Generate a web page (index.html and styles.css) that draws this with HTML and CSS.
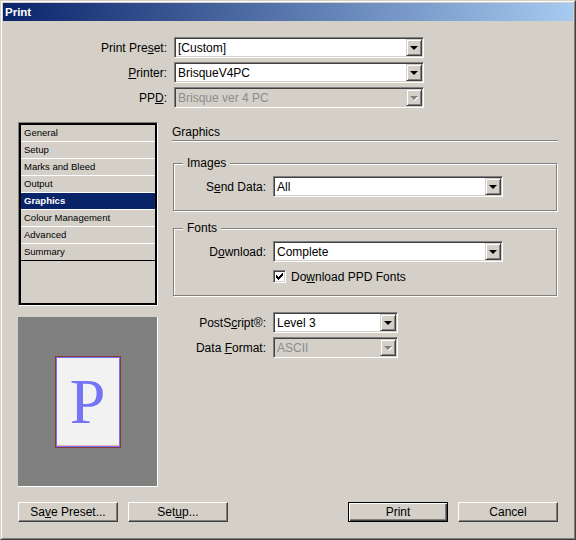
FILE: index.html
```html
<!DOCTYPE html>
<html>
<head>
<meta charset="utf-8">
<title>Print</title>
<link rel="stylesheet" href="styles.css">
</head>
<body>
<div class="window">
  <div class="frame">
    <div class="titlebar"><span>Print</span></div>
    <div class="content">
      <div class="top-form">
        <label class="lbl"><span>Print Pre<u>s</u>et:</span></label>
        <div class="select"><span class="value">[Custom]</span><span class="drop"><i class="arrow"></i></span></div>
        <label class="lbl"><span><u>P</u>rinter:</span></label>
        <div class="select"><span class="value">BrisqueV4PC</span><span class="drop"><i class="arrow"></i></span></div>
        <label class="lbl"><span>PP<u>D</u>:</span></label>
        <div class="select disabled"><span class="value">Brisque ver 4 PC</span><span class="drop"><i class="arrow"></i></span></div>
      </div>

      <div class="main">
        <div class="left">
          <div class="listbox">
            <ul class="list">
              <li>General</li>
              <li>Setup</li>
              <li>Marks and Bleed</li>
              <li>Output</li>
              <li class="selected">Graphics</li>
              <li>Colour Management</li>
              <li>Advanced</li>
              <li class="last">Summary</li>
            </ul>
          </div>
          <div class="preview">
            <div class="page"><span class="page-letter">P</span></div>
          </div>
        </div>

        <div class="right">
          <div class="heading">Graphics</div>

          <div class="group group-images">
            <span class="legend">Images</span>
            <div class="grid">
              <label class="lbl"><span>S<u>e</u>nd Data:</span></label>
              <div class="select"><span class="value">All</span><span class="drop"><i class="arrow"></i></span></div>
            </div>
          </div>

          <div class="group group-fonts">
            <span class="legend">Fonts</span>
            <div class="grid">
              <label class="lbl"><span>D<u>o</u>wnload:</span></label>
              <div class="select"><span class="value">Complete</span><span class="drop"><i class="arrow"></i></span></div>
              <span></span>
              <div class="check-row">
                <span class="checkbox"><svg width="7" height="7" viewBox="0 0 7 7"><path d="M0 2h1v1h1v1h1V3h1V2h1V1h1V0h1v3H6v1H5v1H4v1H3v1H2V6H1V5H0z" fill="#000"/></svg></span>
                <span class="check-label">Do<u>w</u>nload PPD Fonts</span>
              </div>
            </div>
          </div>

          <div class="grid outer-grid">
            <label class="lbl"><span>PostS<u>c</u>ript®:</span></label>
            <div class="select short"><span class="value">Level 3</span><span class="drop"><i class="arrow"></i></span></div>
            <label class="lbl"><span>Data <u>F</u>ormat:</span></label>
            <div class="select short disabled"><span class="value">ASCII</span><span class="drop"><i class="arrow"></i></span></div>
          </div>
        </div>
      </div>

      <div class="buttons">
        <div class="btn-group">
          <button class="btn">Sa<u>v</u>e Preset...</button>
          <button class="btn">Set<u>u</u>p...</button>
        </div>
        <div class="btn-group">
          <button class="btn default">Print</button>
          <button class="btn">Cancel</button>
        </div>
      </div>
    </div>
  </div>
</div>
</body>
</html>
```

FILE: styles.css
```css
html, body {
  margin: 0;
  padding: 0;
  background: #d4d0c8;
}

body {
  width: 576px;
  height: 540px;
  overflow: hidden;
  font-family: "Liberation Sans", Arial, sans-serif;
  font-size: 12px;
  color: #000;
}

u { text-decoration: underline; text-underline-offset: 1px; }

.window {
  width: 576px;
  height: 540px;
  box-sizing: border-box;
  border: 1px solid;
  border-color: #d4d0c8 #404040 #404040 #d4d0c8;
}

.frame {
  height: 100%;
  box-sizing: border-box;
  border: 1px solid;
  border-color: #ffffff #808080 #808080 #ffffff;
  padding: 1px;
  display: flex;
  flex-direction: column;
}

.titlebar {
  height: 18px;
  flex: none;
  background: linear-gradient(90deg, #0a246a 0%, #a6caf0 100%);
  color: #fff;
  font-weight: bold;
  font-size: 11.5px;
  display: flex;
  align-items: center;
  padding-left: 2px;
}

.content {
  flex: 1;
  display: flex;
  flex-direction: column;
}

/* top form */
.top-form {
  display: grid;
  grid-template-columns: 164px 250px;
  column-gap: 7px;
  row-gap: 4px;
  margin-top: 16px;
}

.lbl {
  display: flex;
  align-items: center;
  justify-content: flex-end;
  white-space: nowrap;
}

/* combo box */
.select {
  height: 21px;
  box-sizing: border-box;
  display: flex;
  align-items: stretch;
  background: #fff;
  border: 1px solid;
  border-color: #808080 #ffffff #ffffff #808080;
  box-shadow: inset 1px 1px 0 #404040, inset -1px -1px 0 #d4d0c8;
  padding: 1px;
}

.select .value {
  flex: 1;
  display: flex;
  align-items: center;
  padding-left: 2px;
  white-space: nowrap;
}

.select .drop {
  width: 16px;
  box-sizing: border-box;
  background: #d4d0c8;
  border: 1px solid;
  border-color: #d4d0c8 #404040 #404040 #d4d0c8;
  box-shadow: inset 1px 1px 0 #fff, inset -1px -1px 0 #808080;
  display: flex;
  align-items: center;
  justify-content: center;
}

.arrow {
  display: block;
  width: 0;
  height: 0;
  border-left: 4px solid transparent;
  border-right: 4px solid transparent;
  border-top: 4px solid #000;
  margin-top: 1px;
}

.select.disabled {
  background: #d4d0c8;
}

.select.disabled .value {
  color: #8c8c8c;
}

.select.disabled .arrow {
  border-top-color: #808080;
  filter: drop-shadow(1px 1px 0 #fff);
}

/* main */
.main {
  display: flex;
  margin-top: 14px;
  padding-left: 15px;
}

.left {
  width: 140px;
  display: flex;
  flex-direction: column;
  gap: 11px;
}

.listbox {
  height: 184px;
  box-sizing: border-box;
  border: 1px solid;
  border-color: #808080 #ffffff #ffffff #808080;
}

.list {
  margin: 0;
  padding: 0;
  list-style: none;
  height: 100%;
  box-sizing: border-box;
  border: 2px solid #000;
  background: #d4d0c8;
}

.list li {
  height: 16px;
  line-height: 16px;
  border-bottom: 1px solid #fff;
  padding-left: 3px;
  font-size: 9.5px;
  white-space: nowrap;
}

.list li.selected {
  background: #0a246a;
  color: #fff;
  font-weight: bold;
}

.list li.last {
  border-bottom-color: #000;
}

.preview {
  height: 170px;
  box-sizing: border-box;
  background: #808080;
  border-right: 1px solid #fff;
  border-bottom: 1px solid #fff;
  display: flex;
  align-items: center;
  justify-content: center;
}

.page {
  width: 66px;
  height: 92px;
  box-sizing: border-box;
  border: 1px solid #8a3a3a;
  background: #f2f2f2;
  box-shadow: inset 0 0 0 1px #7474ff, inset 0 -2px 0 0 #f0b4b4;
  display: flex;
  align-items: center;
  justify-content: center;
}

.page-letter {
  font-family: "Liberation Serif", "Times New Roman", serif;
  font-size: 64px;
  line-height: 1;
  color: #7474f4;
}

/* right panel */
.right {
  margin-left: 14px;
  width: 386px;
}

.heading {
  height: 19px;
  box-sizing: border-box;
  border-bottom: 1px solid #808080;
  box-shadow: 0 1px 0 #fff;
  display: flex;
  align-items: flex-end;
  padding-bottom: 1px;
  line-height: 14px;
}

.group {
  position: relative;
  margin-left: 1px;
  width: 384px;
  box-sizing: border-box;
  border: 1px solid #808080;
  box-shadow: inset 1px 1px 0 #fff, 1px 1px 0 #fff;
}

.legend {
  position: absolute;
  top: -8px;
  left: 9px;
  padding: 0 4px;
  line-height: 14px;
  background: #d4d0c8;
}

.group-images {
  margin-top: 22px;
  padding: 12px 0 13px 0;
}

.group-fonts {
  margin-top: 17px;
  padding: 12px 0 11px 0;
}

.grid {
  display: grid;
  grid-template-columns: 92px 230px;
  column-gap: 7px;
  row-gap: 7px;
}

.outer-grid {
  grid-template-columns: 94px 125px;
  row-gap: 4px;
  margin-top: 16px;
}

.check-row {
  height: 15px;
  display: flex;
  align-items: center;
  gap: 5px;
}

.checkbox {
  width: 13px;
  height: 13px;
  box-sizing: border-box;
  background: #fff;
  border: 1px solid;
  border-color: #808080 #ffffff #ffffff #808080;
  box-shadow: inset 1px 1px 0 #404040, inset -1px -1px 0 #d4d0c8;
  display: flex;
  align-items: center;
  justify-content: center;
}

.checkbox svg { display: block; }

/* buttons */
.buttons {
  display: flex;
  justify-content: space-between;
  margin-top: 15px;
  padding: 0 15px;
}

.btn-group {
  display: flex;
  gap: 10px;
}

.btn {
  width: 100px;
  height: 20px;
  box-sizing: border-box;
  margin: 0;
  padding: 0;
  font-family: "Liberation Sans", Arial, sans-serif;
  font-size: 12px;
  color: #000;
  background: #d4d0c8;
  border: 1px solid;
  border-color: #ffffff #404040 #404040 #ffffff;
  box-shadow: inset -1px -1px 0 #808080;
  border-radius: 0;
}

.btn.default {
  border: 1px solid #000;
  box-shadow: inset 1px 1px 0 #fff, inset -1px -1px 0 #404040, inset -2px -2px 0 #808080;
}
```
